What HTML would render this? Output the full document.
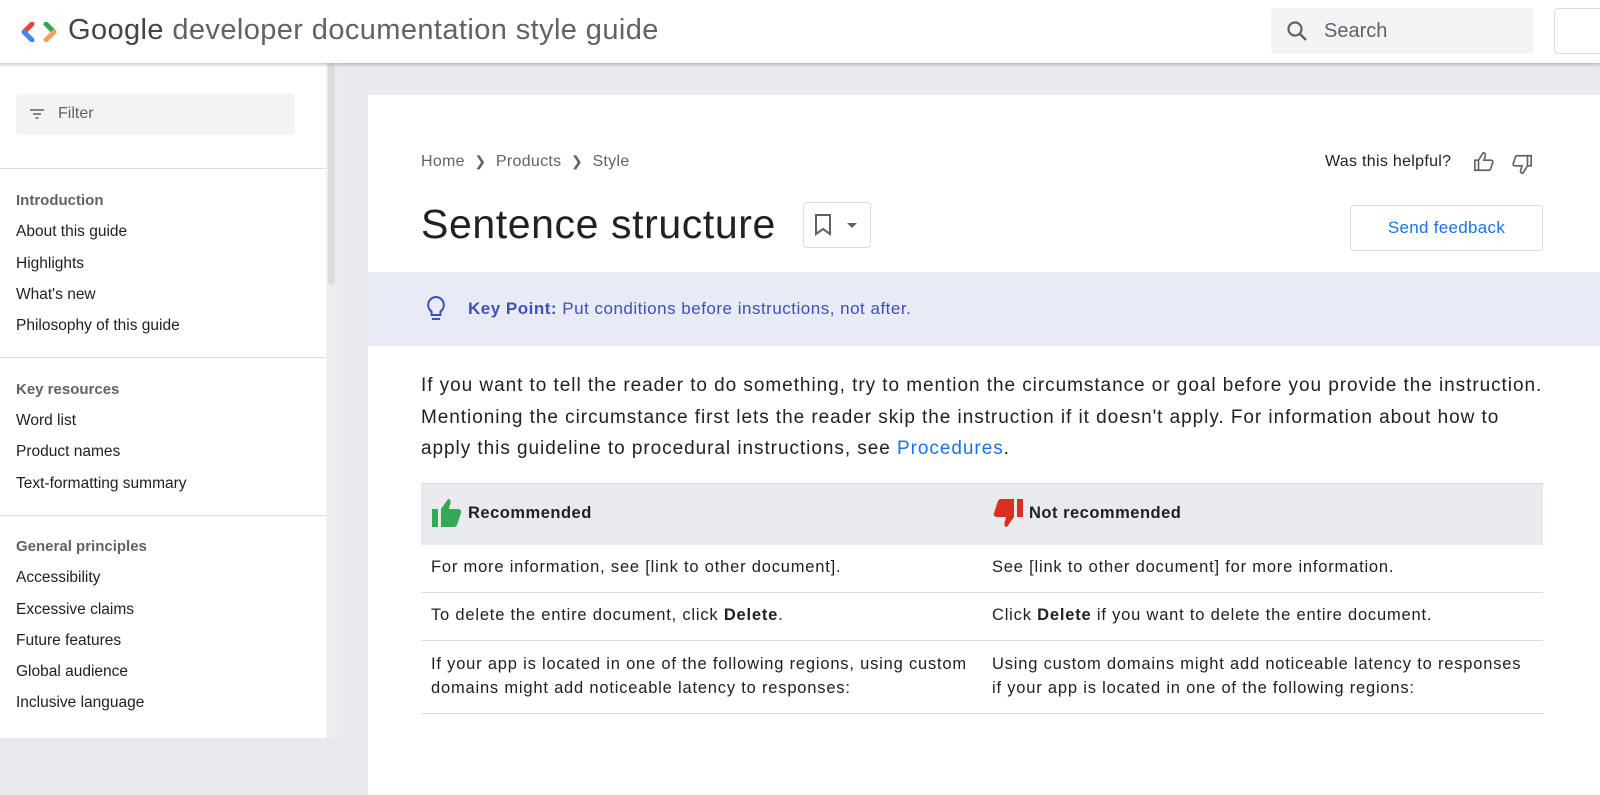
<!DOCTYPE html>
<html><head><style>
*{box-sizing:border-box;margin:0;padding:0}
body{width:1600px;height:738px;overflow:hidden;font-family:"Liberation Sans",Arial,sans-serif;background:#e8eaed;position:relative;color:#202124}
.hdr{position:absolute;left:0;top:0;width:1600px;height:63px;background:#fff;box-shadow:0 1px 4px rgba(0,0,0,.3);z-index:3}
.logo{position:absolute;left:68px;top:14px;font-size:29px;color:#5f6368;letter-spacing:0.4px}
.logo b{font-weight:normal;color:#444}
.search{position:absolute;left:1271px;top:8px;width:262px;height:46px;background:#f1f3f4;border-radius:4px}
.search span{position:absolute;left:53px;top:12px;font-size:20px;color:#5f6368}
.side{position:absolute;left:0;top:63px;width:326px;height:675px;background:#fff}
.sb{position:absolute;left:326px;top:63px;width:11px;height:675px;background:#eceef0}
.sb i{position:absolute;left:2px;top:0;width:7px;height:222px;background:#dadce0;border-radius:4px}
.filter{position:absolute;left:16px;top:31px;width:279px;height:41px;background:#f1f3f4;border-radius:4px}
.filter span{position:absolute;left:42px;top:11px;font-size:16px;color:#5f6368}
.hr{position:absolute;left:0;width:326px;border-top:1px solid #dadce0}
.it{position:absolute;left:16px;font-size:15.5px;color:#202124}
.it.h{font-weight:bold;color:#5f6368;font-size:15px}
.card{position:absolute;left:368px;top:95px;width:1232px;height:700px;background:#fff}
.t{position:absolute;white-space:nowrap}
.tb{font-size:16.5px;letter-spacing:0.8px}
</style></head><body>
<div class="hdr">
<svg style="position:absolute;left:21px;top:22px" width="36" height="20" viewBox="0 0 36 20"><path d="M11 2 L3 10" stroke="#ea4335" stroke-width="5" stroke-linecap="round"/><path d="M3 10 L11 18" stroke="#4285f4" stroke-width="5" stroke-linecap="round"/><path d="M25 2 L33 10" stroke="#34a853" stroke-width="5" stroke-linecap="round"/><path d="M33 10 L25 18" stroke="#f6a05a" stroke-width="5" stroke-linecap="round"/></svg>
<div class="logo"><b>Google</b> developer documentation style guide</div>
<div class="search"><svg style="position:absolute;left:14px;top:11px" width="24" height="24" viewBox="0 0 24 24"><circle cx="10" cy="10" r="6.5" stroke="#5f6368" stroke-width="2.2" fill="none"/><path d="M15 15l6 6" stroke="#5f6368" stroke-width="2.4"/></svg><span>Search</span></div>
<div style="position:absolute;left:1554px;top:8px;width:60px;height:46px;border:1px solid #dadce0;border-radius:4px"></div>
</div>
<div class="side">
<div class="filter"><svg style="position:absolute;left:14px;top:14px" width="14" height="12"><path d="M0 2h14M3 6h8M5.5 10h3" stroke="#5f6368" stroke-width="1.6"/></svg><span>Filter</span></div>
<div class="hr" style="top:105px"></div>
<div class="it h" style="top:129px">Introduction</div>
<div class="it" style="top:160px">About this guide</div>
<div class="it" style="top:192px">Highlights</div>
<div class="it" style="top:223px">What's new</div>
<div class="it" style="top:254px">Philosophy of this guide</div>
<div class="hr" style="top:294px"></div>
<div class="it h" style="top:318px">Key resources</div>
<div class="it" style="top:349px">Word list</div>
<div class="it" style="top:380px">Product names</div>
<div class="it" style="top:412px">Text-formatting summary</div>
<div class="hr" style="top:452px"></div>
<div class="it h" style="top:475px">General principles</div>
<div class="it" style="top:506px">Accessibility</div>
<div class="it" style="top:538px">Excessive claims</div>
<div class="it" style="top:569px">Future features</div>
<div class="it" style="top:600px">Global audience</div>
<div class="it" style="top:631px">Inclusive language</div>
</div>
<div class="sb"><i></i></div>
<div class="card">
<div class="t" style="left:53px;top:58px;font-size:16px;color:#5f6368;letter-spacing:0.3px">Home &nbsp;<span style="font-size:14px">❯</span>&nbsp; Products &nbsp;<span style="font-size:14px">❯</span>&nbsp; Style</div>
<div class="t" style="left:957px;top:58px;font-size:16px;letter-spacing:0.3px">Was this helpful?</div>
<svg style="position:absolute;left:1105px;top:56px" width="22" height="22" viewBox="0 0 24 24"><path d="M2 10h4v11H2zM6 10l5-8c2 0 3 1 2.5 3L12 10h8c1 0 2 1 1.6 2.3L19 20c-.3.7-1 1-1.7 1H6" fill="none" stroke="#5f6368" stroke-width="1.8"/></svg>
<svg style="position:absolute;left:1143px;top:58px;transform:scale(-1,-1)" width="22" height="22" viewBox="0 0 24 24"><path d="M2 10h4v11H2zM6 10l5-8c2 0 3 1 2.5 3L12 10h8c1 0 2 1 1.6 2.3L19 20c-.3.7-1 1-1.7 1H6" fill="none" stroke="#5f6368" stroke-width="1.8"/></svg>
<div class="t" style="left:53px;top:106px;font-size:41px;color:#202124;letter-spacing:0.6px">Sentence structure</div>
<div style="position:absolute;left:435px;top:107px;width:68px;height:46px;border:1px solid #dadce0;border-radius:4px"><svg style="position:absolute;left:10px;top:11px" width="20" height="22"><path d="M2 1h14v19l-7-5-7 5z" fill="none" stroke="#5f6368" stroke-width="2"/></svg><svg style="position:absolute;left:43px;top:20px" width="10" height="6"><path d="M0 0h10L5 5z" fill="#5f6368"/></svg></div>
<div style="position:absolute;left:982px;top:110px;width:193px;height:46px;border:1px solid #dadce0;border-radius:4px;color:#1a73e8;font-size:17px;text-align:center;line-height:44px;letter-spacing:0.3px">Send feedback</div>
<div style="position:absolute;left:0;top:177px;width:1232px;height:74px;background:#e8eaf6"></div>
<svg style="position:absolute;left:58px;top:200px" width="20" height="28" viewBox="0 0 20 28"><path d="M10 2a8 8 0 0 0-4.5 14.5V20h9v-3.5A8 8 0 0 0 10 2z" fill="none" stroke="#3f51b5" stroke-width="2"/><path d="M6 24h8" stroke="#3f51b5" stroke-width="2"/></svg>
<div class="t" style="left:100px;top:204px;font-size:17px;color:#3f51b5;letter-spacing:0.5px"><b>Key Point:</b> Put conditions before instructions, not after.</div>
<div style="position:absolute;left:53px;top:275px;font-size:19px;letter-spacing:0.95px;line-height:31.5px;width:1130px;color:#202124">If you want to tell the reader to do something, try to mention the circumstance or goal before you provide the instruction. Mentioning the circumstance first lets the reader skip the instruction if it doesn't apply. For information about how to apply this guideline to procedural instructions, see <span style="color:#1a73e8">Procedures</span>.</div>
<div style="position:absolute;left:53px;top:388px;width:1122px;height:62px;background:#e8eaed;border-top:1px solid #dadce0"></div>
<svg style="position:absolute;left:64px;top:404px" width="30" height="28" viewBox="0 0 30 28"><rect x="0" y="10" width="6" height="18" fill="#34a853"/><path d="M9 10l7-10c3 0 3 3 2 6l-1 4h9c2 0 4 2 3 4l-4 12c-.5 1-1.5 2-3 2H9z" fill="#34a853"/></svg>
<div class="t" style="left:100px;top:409px;font-size:16.5px;font-weight:bold;letter-spacing:0.5px">Recommended</div>
<svg style="position:absolute;left:625px;top:404px;transform:scale(-1,-1)" width="30" height="28" viewBox="0 0 30 28"><rect x="0" y="10" width="6" height="18" fill="#d93025"/><path d="M9 10l7-10c3 0 3 3 2 6l-1 4h9c2 0 4 2 3 4l-4 12c-.5 1-1.5 2-3 2H9z" fill="#d93025"/></svg>
<div class="t" style="left:661px;top:409px;font-size:16.5px;font-weight:bold;letter-spacing:0.5px">Not recommended</div>
<div style="position:absolute;left:53px;top:497px;width:1122px;border-top:1px solid #dadce0"></div>
<div style="position:absolute;left:53px;top:545px;width:1122px;border-top:1px solid #dadce0"></div>
<div style="position:absolute;left:53px;top:618px;width:1122px;border-top:1px solid #dadce0"></div>
<div class="t tb" style="left:63px;top:463px">For more information, see [link to other document].</div>
<div class="t tb" style="left:624px;top:463px">See [link to other document] for more information.</div>
<div class="t tb" style="left:63px;top:511px">To delete the entire document, click <b>Delete</b>.</div>
<div class="t tb" style="left:624px;top:511px">Click <b>Delete</b> if you want to delete the entire document.</div>
<div class="t tb" style="left:63px;top:557px;line-height:24px">If your app is located in one of the following regions, using custom<br>domains might add noticeable latency to responses:</div>
<div class="t tb" style="left:624px;top:557px;line-height:24px">Using custom domains might add noticeable latency to responses<br>if your app is located in one of the following regions:</div>
</div>
</body></html>
